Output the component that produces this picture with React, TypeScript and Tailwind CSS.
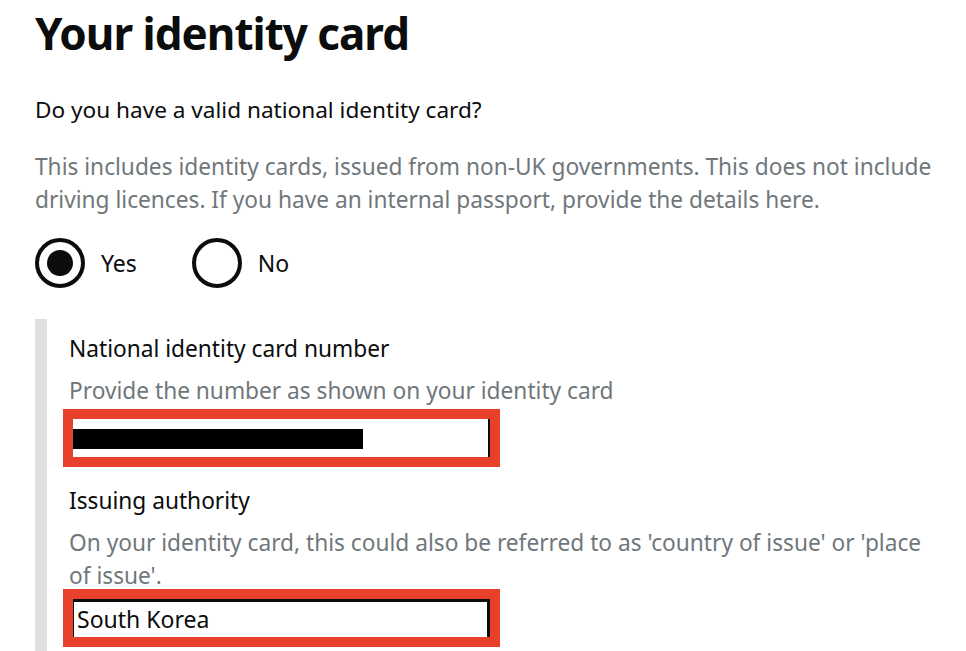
import React from "react";

function Radio({ checked, label }: { checked?: boolean; label: string }) {
  return (
    <div className="flex items-center">
      <div className="w-[50px] h-[50px] rounded-full border-[4px] border-[#0b0c0c] flex items-center justify-center">
        {checked && <div className="w-[26px] h-[26px] rounded-full bg-[#0b0c0c]" />}
      </div>
      <span className="ml-[16px] text-[23px] leading-[30px]">{label}</span>
    </div>
  );
}

export default function App() {
  return (
    <div className="w-[966px] h-[651px] overflow-hidden bg-white text-[#0b0c0c] font-['Noto_Sans',sans-serif] pl-[35px] pr-[31px]">
      <h1 className="text-[44px] font-bold leading-[50px] pt-[8px] tracking-[-1px]">Your identity card</h1>
      <p className="mt-[36px] text-[22.6px] leading-[32px]">Do you have a valid national identity card?</p>
      <p className="mt-[24px] text-[22.7px] leading-[33px] text-[#6f777b]">
        This includes identity cards, issued from non-UK governments. This does not include driving licences. If you have an internal passport, provide the details here.
      </p>
      <div className="mt-[22px] flex gap-[55px]">
        <Radio checked label="Yes" />
        <Radio label="No" />
      </div>
      <div className="mt-[31px] border-l-[12px] border-[#dedfe0] pl-[22px] pt-[14px] pb-[20px]">
        <label className="block text-[22.7px] leading-[32px]">National identity card number</label>
        <p className="mt-[9px] text-[22.7px] leading-[33px] text-[#6f777b]">Provide the number as shown on your identity card</p>
        <div className="mt-[2px] ml-[-6px] w-[437px] h-[58px] border-[10px] border-[#e8412b] bg-white relative">
          <div className="absolute inset-y-0 right-0 w-[2px] bg-[#0b0c0c]" />
          <div className="absolute left-0 top-[10px] w-[290px] h-[20px] bg-black" />
        </div>
        <label className="mt-[18px] block text-[22.7px] leading-[32px]">Issuing authority</label>
        <p className="mt-[9px] text-[22.7px] leading-[33px] text-[#6f777b]">
          On your identity card, this could also be referred to as 'country of issue' or 'place of issue'.
        </p>
        <div className="mt-[-3px] ml-[-6px] w-[437px] h-[58px] border-[10px] border-[#e8412b] bg-white relative">
          <div className="absolute inset-0 border-t-[3px] border-r-[3px] border-l-[1px] border-[#0b0c0c]" />
          <span className="absolute left-[4px] top-[6px] text-[23px] leading-[28px]">South Korea</span>
        </div>
      </div>
    </div>
  );
}
